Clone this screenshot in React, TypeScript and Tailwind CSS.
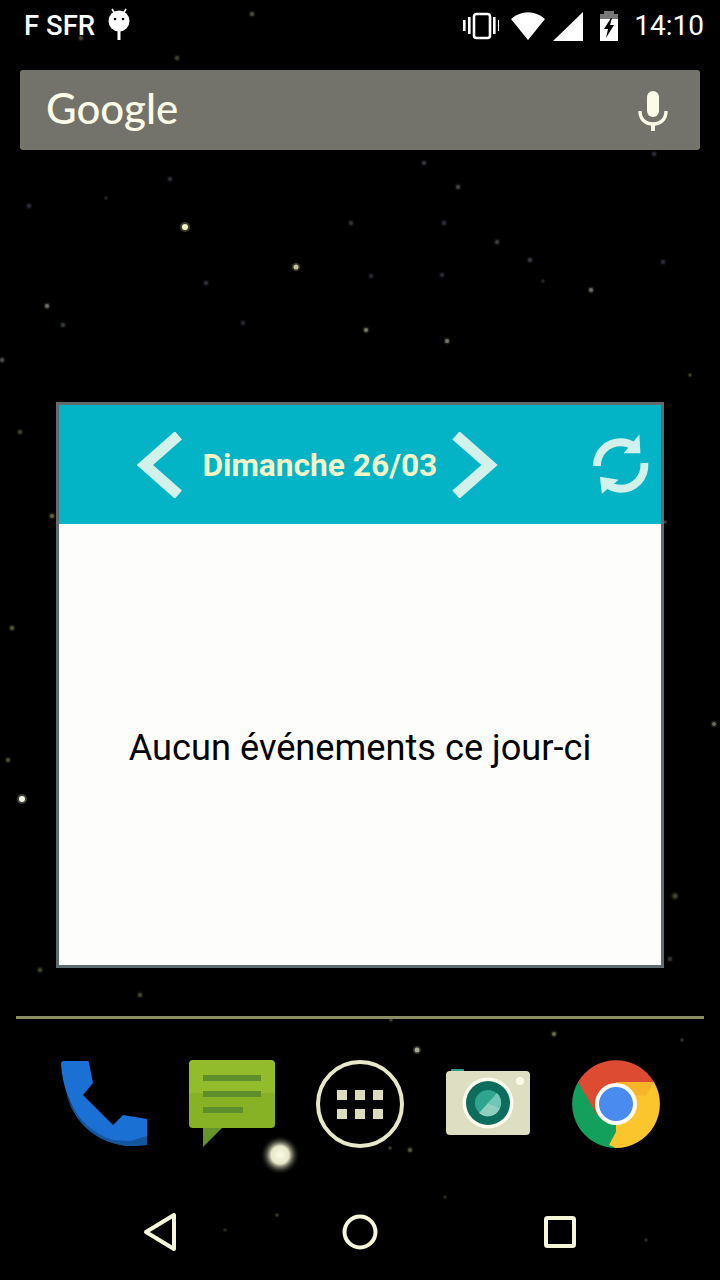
const CREAM = '#f6f6d8';
const ICON_TINT = '#d2f1ea';

// wallpaper dots: x, y, radius, colour
const stars: [number, number, number, string][] = [
  [185, 227, 3, '#f6f4c4'], [296, 267, 2.5, '#c4c49c'], [591, 290, 2, '#6a6a60'], [366, 330, 2, '#767660'],
  [447, 341, 2, '#77776a'], [47, 306, 2, '#6c6c62'], [424, 163, 2, '#33333f'], [458, 187, 2, '#44443f'],
  [170, 179, 2, '#2a2a38'], [106, 198, 1.5, '#26262e'], [29, 206, 2, '#2a2a38'], [351, 223, 2, '#30303a'],
  [444, 223, 2, '#2e2e38'], [654, 154, 2, '#2a2a38'], [497, 242, 2, '#3c3c40'], [530, 260, 2, '#383844'],
  [663, 262, 2, '#2a2a36'], [206, 283, 2, '#2e2e3c'], [371, 276, 2, '#26262e'], [442, 275, 2, '#282836'],
  [543, 281, 1.5, '#26262e'], [63, 325, 2, '#2c3a34'], [243, 323, 2, '#26262e'], [2, 360, 2, '#4a4a4a'],
  [22, 799, 3, '#f4f4e0'], [417, 1050, 2.5, '#a8a890'], [595, 132, 3, '#c6c6a6'],
  [280, 88, 2, '#8c8c6c'], [420, 75, 2, '#6a6a5c'], [252, 14, 2, '#4d4d38'], [81, 38, 2, '#48483a'], [177, 58, 2, '#3e3e30'],
  [102, 145, 2, '#a0a080'], [714, 724, 2, '#6a6a5a'], [675, 896, 2.5, '#3e3e30'], [670, 959, 2, '#33332c'],
  [665, 522, 1.5, '#44443a'], [12, 628, 2, '#56562e'], [52, 516, 2, '#64643c'], [690, 375, 1.5, '#3e3e26'],
  [20, 432, 2, '#404028'], [40, 970, 2, '#3c4a1c'], [140, 995, 2, '#3e4a20'], [391, 1020, 1.5, '#44442a'],
  [554, 1034, 2, '#67674a'], [410, 1150, 2, '#56563c'], [390, 1148, 1.5, '#3a3a28'],
  [8, 760, 2, '#4a4a2c'], [682, 1040, 1.5, '#33331e'], [277, 1215, 1.5, '#3a3a24'], [445, 1197, 1.5, '#2a2a1c'],
  [646, 1240, 1.5, '#2a2a20'], [225, 1230, 1.5, '#2a2a1c'],
];

function Wallpaper() {
  return (
    <svg className="absolute inset-0" width={720} height={1280}>
      <defs>
        <radialGradient id="glow">
          <stop offset="0%" stopColor="#fbfbe6" />
          <stop offset="45%" stopColor="#e6e6c8" />
          <stop offset="100%" stopColor="#000000" stopOpacity="0" />
        </radialGradient>
      </defs>
      {stars.map(([x, y, r, c]) => (
        <g key={`${x}-${y}`}>
          <circle cx={x} cy={y} r={r * 1.7} fill={c} opacity={0.25} />
          <circle cx={x} cy={y} r={r} fill={c} />
        </g>
      ))}
      <circle cx={280} cy={1155} r={20} fill="url(#glow)" />
    </svg>
  );
}

function StatusBar() {
  return (
    <div className="relative flex h-[48px] items-center pl-6 pr-4 pt-1 text-white font-['Roboto',sans-serif]">
      <span className="text-[27.5px] font-medium leading-none">F SFR</span>
      <svg className="ml-[11px] -mt-[2px]" width={26} height={34} viewBox="0 0 26 34">
        <path d="M6 1l3 5M20 1l-3 5" stroke="white" strokeWidth="1.6" />
        <circle cx="13" cy="13" r="10.5" fill="white" />
        <circle cx="9" cy="11" r="1.3" fill="black" />
        <circle cx="17" cy="11" r="1.3" fill="black" />
        <rect x="11.5" y="22" width="3" height="10" fill="white" />
      </svg>
      <div className="ml-auto flex items-center">
        <svg width={36} height={30} viewBox="0 0 36 30">
          <rect x="11" y="3" width="16" height="24" rx="2.5" fill="none" stroke="white" strokeWidth="2.6" />
          <rect x="0" y="9" width="2.6" height="11" fill="white" />
          <rect x="5" y="6" width="2.6" height="17" fill="white" />
          <rect x="30" y="6" width="2.6" height="17" fill="white" />
          <rect x="35" y="9" width="1" height="11" fill="white" />
        </svg>
        <svg className="ml-[11px]" width={36} height={30} viewBox="0 0 36 30">
          <path d="M18 29L1 8C11 -1 25 -1 35 8Z" fill="white" />
        </svg>
        <svg className="ml-[6px]" width={32} height={30} viewBox="0 0 32 30">
          <path d="M1 30L31 1V30Z" fill="white" />
        </svg>
        <svg className="ml-[15px]" width={20} height={30} viewBox="0 0 20 30">
          <path d="M5 0h10v3h4v5H1V3h4z" fill="#777" />
          <path d="M1 8h18v22H1z" fill="white" />
          <path d="M12 7L5 18h4l-2 9 8-13h-4l2-7z" fill="black" />
        </svg>
        <span className="ml-[15px] text-[28px] leading-none">14:10</span>
      </div>
    </div>
  );
}

function SearchBar() {
  return (
    <div className="relative mx-5 mt-[22px] flex h-[80px] items-center justify-between rounded-[3px] bg-[#73736b] pl-[26px] pr-[32px]">
      <span className="text-[42px] font-medium leading-none font-['Lato',sans-serif] text-[#fbfbe8] -mt-1">Google</span>
      <svg width={30} height={42} viewBox="0 0 30 42">
        <rect x="9" y="2" width="12" height="26" rx="6" fill="#fbfbe8" />
        <path d="M2 22c0 8 5 13 13 13s13-5 13-13" fill="none" stroke="#fbfbe8" strokeWidth="3.4" />
        <rect x="13" y="34" width="4" height="8" fill="#fbfbe8" />
      </svg>
    </div>
  );
}

function Widget() {
  return (
    <div className="relative mx-[56px] mt-[252px] flex h-[566px] flex-col border-[3px] border-[#5f6b6e] bg-[#fdfdfb]">
      <div className="flex h-[119px] shrink-0 items-center bg-[#02b4c6] pl-[78px] pr-[11px]">
        <svg width={46} height={66} viewBox="0 0 46 66">
          <path d="M42 3L8 33l34 30" fill="none" stroke={ICON_TINT} strokeWidth="11" />
        </svg>
        <span className="ml-5 w-[235px] whitespace-nowrap pt-[2px] text-[31.7px] font-bold leading-none text-[#f3f6c6] font-['Roboto',sans-serif]">
          Dimanche 26/03
        </span>
        <svg className="ml-[15px]" width={46} height={66} viewBox="0 0 46 66">
          <path d="M4 3l34 30L4 63" fill="none" stroke={ICON_TINT} strokeWidth="11" />
        </svg>
        <svg className="ml-[95px]" width={58} height={64} viewBox="594 432 58 64">
          <path d="M598 465c0-14 11-24 24-24 5 0 9 1 13 4" fill="none" stroke={ICON_TINT} strokeWidth="8" />
          <path d="M641 433l1 19h-17z" fill={ICON_TINT} />
          <path d="M646 462c1 15-10 26-24 26-5 0-9-1-12-4" fill="none" stroke={ICON_TINT} strokeWidth="8" />
          <path d="M601 476l19 3-17 14z" fill={ICON_TINT} />
        </svg>
      </div>
      <div className="flex flex-1 items-center justify-center pt-[8px]">
        <span className="text-[36.2px] leading-none text-black font-['Roboto',sans-serif]">Aucun événements ce jour-ci</span>
      </div>
    </div>
  );
}

function PhoneIcon() {
  return (
    <svg width={88} height={88} viewBox="60 1060 88 88">
      <path d="M61 1064q0-3 3-3h24q1 0 1 2l4 20-10 12 30 30 10-10 24 4v26l-17 1c-40-2-66-38-69-82z" fill="#1b70d4" />
      <path d="M66 1092c8 24 24 40 47 48l17 1 17-5v9l-17 1c-34-2-57-24-64-54z" fill="#14569e" />
    </svg>
  );
}

function MessagesIcon() {
  return (
    <svg width={86} height={88} viewBox="189 1060 86 88">
      <path d="M193 1060h78q4 0 4 4v29h-86v-29q0-4 4-4z" fill="#93bc2c" />
      <path d="M189 1093h86v31q0 4-4 4h-78q-4 0-4-4z" fill="#88b226" />
      <path d="M203 1128h19l-19 19z" fill="#66942c" />
      <rect x="203" y="1075" width="58" height="6" fill="#5f8f2c" />
      <rect x="203" y="1091" width="58" height="6" fill="#5f8f2c" />
      <rect x="203" y="1107" width="40" height="6" fill="#5f8f2c" />
    </svg>
  );
}

function AppsIcon() {
  return (
    <svg width={88} height={88} viewBox="316 1060 88 88">
      <circle cx="360" cy="1104" r="42" fill="none" stroke="#e8e8c8" strokeWidth="4" />
      {[337, 355, 373].map((x) =>
        [1090, 1109].map((y) => <rect key={`${x}-${y}`} x={x} y={y} width="10" height="10" fill="#dcdcbc" />)
      )}
    </svg>
  );
}

function CameraIcon() {
  return (
    <svg width={86} height={88} viewBox="445 1060 86 88">
      <rect x="451" y="1069" width="13" height="5" rx="1" fill="#2f9d88" />
      <rect x="446" y="1071" width="84" height="64" rx="4" fill="#dedec2" />
      <circle cx="520" cy="1081" r="4" fill="#fbfbe8" />
      <circle cx="488" cy="1103" r="25.5" fill="#fdfdf0" />
      <circle cx="488" cy="1103" r="22" fill="#0d6d5c" />
      <circle cx="488" cy="1103" r="13" fill="#2fa58f" />
      <path d="M488 1103l9-10a13 13 0 0 1 3 15z" fill="#72c8b6" />
      <path d="M488 1103l12 5a13 13 0 0 1-21 5z" fill="#8ecfc0" />
    </svg>
  );
}

function ChromeIcon() {
  return (
    <svg width={88} height={88} viewBox="572 1060 88 88">
      <path d="M616 1104l-38-22a44 44 0 0 1 76 0z" fill="#dd4b33" />
      <path d="M616 1104l38-22a44 44 0 0 1-38 66z" fill="#fbc52d" />
      <path d="M616 1104l-0 44a44 44 0 0 1-38-66z" fill="#12a05c" />
      <path d="M597 1115l-19-33 14-7 20 29z" fill="#dd4b33" />
      <path d="M616 1082h38l-8 14-30-2z" fill="#f8b52a" />
      <path d="M635 1115l-19 33-7-3 16-30z" fill="#fbc52d" />
      <circle cx="616" cy="1104" r="21" fill="#fdfdf4" />
      <circle cx="616" cy="1104" r="17" fill="#4a8bf0" />
    </svg>
  );
}

function NavBar() {
  return (
    <div className="mt-[59px] flex h-[50px] items-center justify-between pl-[143px] pr-[143px]">
      <svg width={34} height={40} viewBox="143 1212 34 40">
        <path d="M146 1232l28-17v34z" fill="none" stroke={CREAM} strokeWidth="4" strokeLinejoin="round" />
      </svg>
      <svg width={36} height={36} viewBox="0 0 36 36">
        <circle cx="18" cy="18" r="15.5" fill="none" stroke={CREAM} strokeWidth="4" />
      </svg>
      <svg width={34} height={34} viewBox="0 0 34 34">
        <rect x="3" y="3" width="28" height="28" rx="1.5" fill="none" stroke={CREAM} strokeWidth="4" />
      </svg>
    </div>
  );
}

export default function App() {
  return (
    <div className="relative h-[1280px] w-[720px] overflow-hidden bg-black">
      <Wallpaper />
      <StatusBar />
      <SearchBar />
      <Widget />
      <div className="relative mx-4 mt-[48px] h-[3px] bg-[#8d8d62]" />
      <div className="relative mt-[41px] flex h-[88px] items-center justify-between pl-[60px] pr-[60px]">
        <PhoneIcon />
        <MessagesIcon />
        <AppsIcon />
        <CameraIcon />
        <ChromeIcon />
      </div>
      <div className="relative">
        <NavBar />
      </div>
    </div>
  );
}
